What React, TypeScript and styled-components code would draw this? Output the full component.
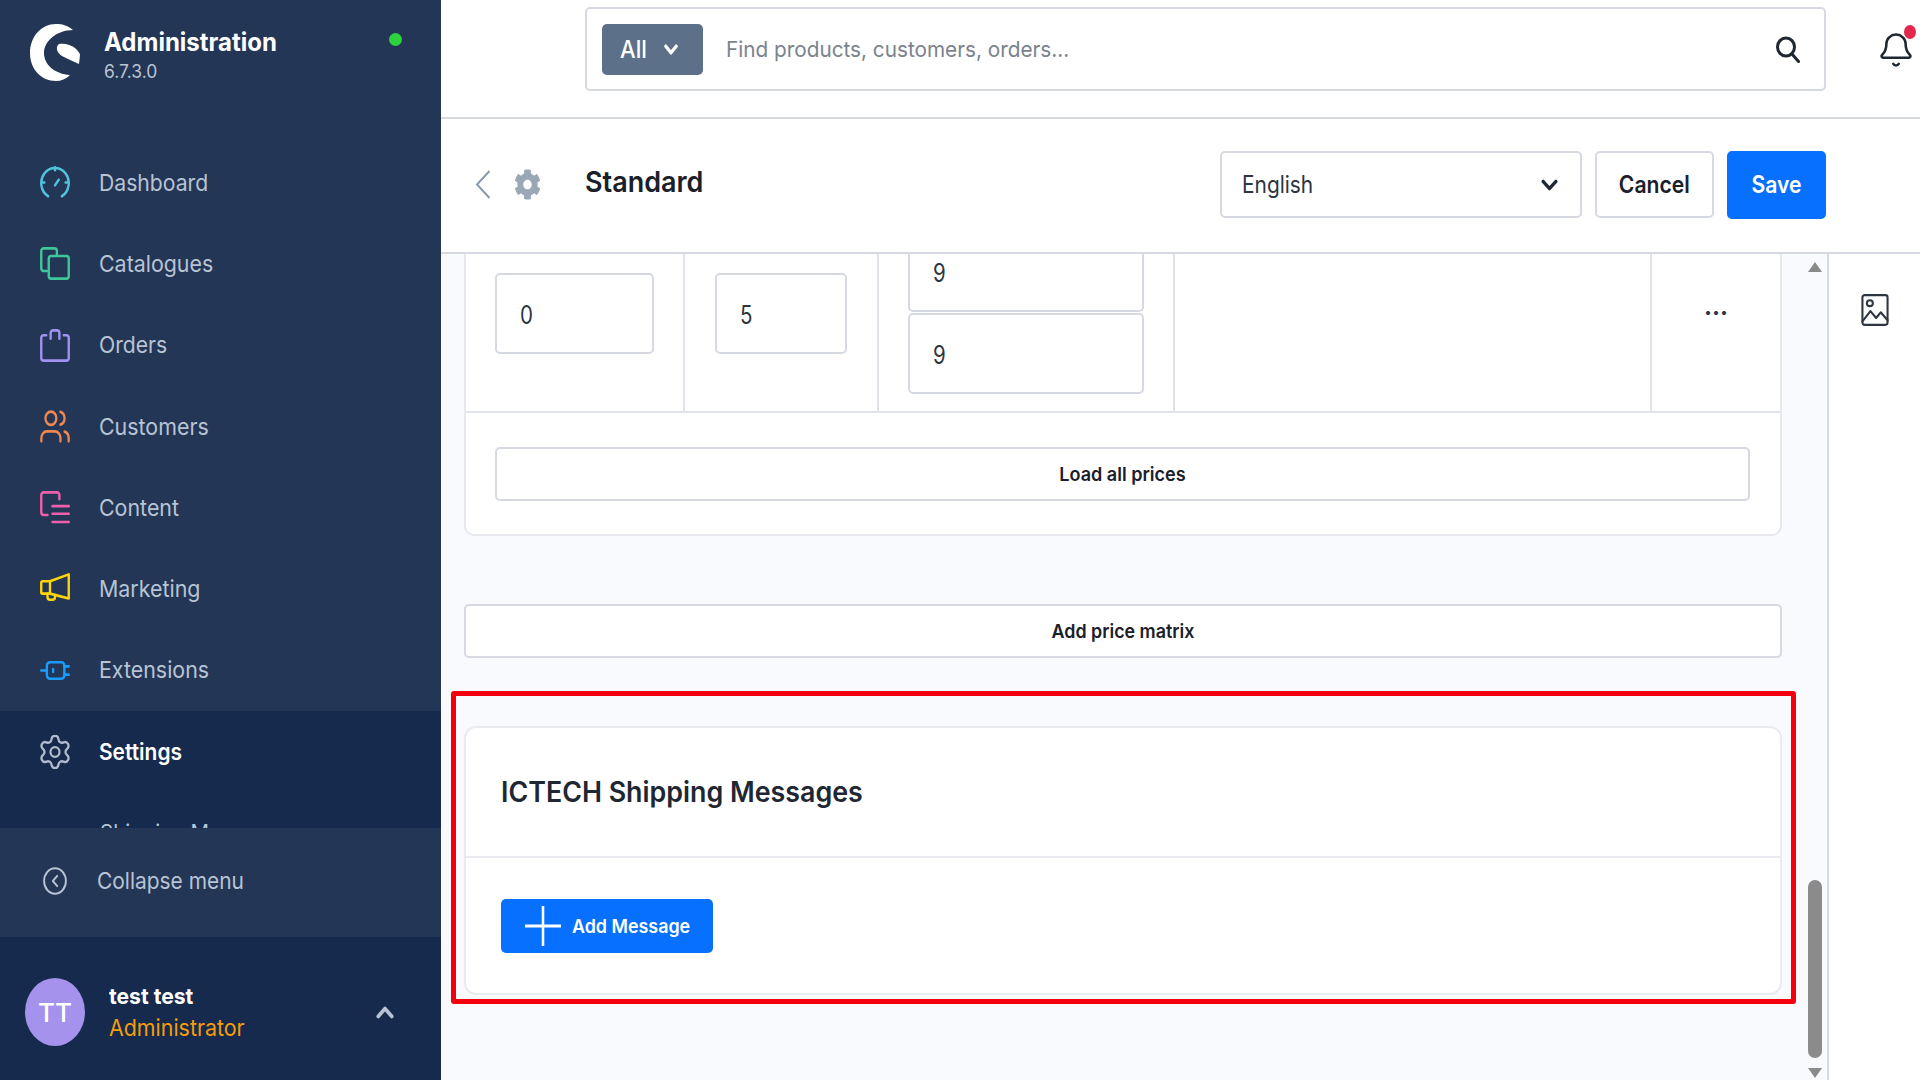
import React from "react";
import styled, { createGlobalStyle } from "styled-components";
import { Bell, ChevronDown, ChevronUp, CircleChevronLeft, Plus, Settings, Users } from "lucide-react";
import { FaCog } from "react-icons/fa";

const Global = createGlobalStyle`
  html, body { margin: 0; padding: 0; background: #fff; }
  * { box-sizing: border-box; }
  body { font-family: Inter, "Noto Sans", sans-serif; color: #1f2733; }
`;

const Page = styled.div`
  display: flex;
  width: 1920px;
  height: 1080px;
  overflow: hidden;
`;

const Sq = styled.span<{ $x: number; $center?: boolean }>`
  display: inline-block;
  white-space: nowrap;
  transform: scaleX(${(p) => p.$x});
  transform-origin: ${(p) => (p.$center ? "center" : "left")} center;
`;

const Sidebar = styled.aside`
  flex: 0 0 441px;
  height: 1080px;
  display: flex;
  flex-direction: column;
  background: #243656;
`;

const Brand = styled.div`
  flex: 0 0 142px;
  display: flex;
  padding: 22px 40px 0 29px;
  gap: 23px;
  position: relative;
`;

const BrandText = styled.div`
  display: flex;
  flex-direction: column;
  padding-top: 5px;
`;

const BrandName = styled.span`
  font-size: 25px;
  line-height: 30px;
  font-weight: 700;
  color: #fff;
`;

const BrandVersion = styled.span`
  font-size: 18px;
  line-height: 29px;
  color: #b9c5d4;
`;

const StatusDot = styled.span`
  position: absolute;
  left: 389px;
  top: 33px;
  width: 13px;
  height: 13px;
  border-radius: 50%;
  background: #2fd13f;
`;

const Nav = styled.nav`
  flex: 0 0 685.5px;
  min-height: 0;
  display: flex;
  flex-direction: column;
`;

const NavItem = styled.div<{ $active?: boolean }>`
  flex: 0 0 81.3px;
  display: flex;
  align-items: center;
  gap: 29px;
  padding-left: 40px;
  font-size: 23px;
  font-weight: ${(p) => (p.$active ? 600 : 400)};
  color: ${(p) => (p.$active ? "#fff" : "#b8c4d4")};
`;

const ActiveGroup = styled.div`
  flex: 1;
  min-height: 0;
  overflow: hidden;
  background: #162a4e;
  display: flex;
  flex-direction: column;
`;

const SubItem = styled.div`
  padding: 25px 0 0 100px;
  font-size: 22px;
  line-height: 30px;
  color: #b8c4d4;
`;

const Collapse = styled.div`
  flex: 0 0 109px;
  display: flex;
  align-items: center;
  padding: 0 0 2px 43px;
  gap: 30px;
  font-size: 23px;
  color: #b8c4d4;
`;

const UserBar = styled.div`
  flex: 1;
  background: #162a4e;
  display: flex;
  align-items: center;
  padding: 8px 47px 0 25px;
`;

const Avatar = styled.div`
  flex: 0 0 60px;
  height: 68px;
  border-radius: 50%;
  background: #a592ec;
  color: #fff;
  font-size: 26px;
  font-weight: 500;
  display: flex;
  align-items: center;
  justify-content: center;
`;

const UserText = styled.div`
  flex: 1;
  margin-left: 24px;
  display: flex;
  flex-direction: column;
`;

const UserName = styled.span`
  font-size: 22px;
  line-height: 32px;
  font-weight: 700;
  color: #fff;
`;

const UserRole = styled.span`
  font-size: 23px;
  line-height: 32px;
  color: #f59c0c;
`;

const Main = styled.div`
  flex: 1;
  min-width: 0;
  display: flex;
  flex-direction: column;
`;

const Header = styled.header`
  flex: 0 0 119px;
  border-bottom: 2px solid #d6d9e1;
  display: flex;
  align-items: flex-start;
  padding: 7px 0 0 144px;
`;

const SearchBox = styled.div`
  width: 1241px;
  height: 84px;
  border: 2px solid #d6d9e1;
  border-radius: 5px;
  display: flex;
  align-items: center;
  padding: 0 24px 0 15px;
`;

const ScopeButton = styled.div`
  width: 101px;
  height: 51px;
  border-radius: 5px;
  background: #5c7189;
  color: #fff;
  display: flex;
  align-items: center;
  gap: 15px;
  padding-left: 18px;
  font-size: 24px;
  font-weight: 500;
`;

const Placeholder = styled.span`
  flex: 1;
  margin-left: 23px;
  font-size: 22px;
  color: #7b838d;
`;

const BellWrap = styled.div`
  position: relative;
  margin: 26px 0 0 54px;
  width: 32px;
  height: 34px;
  color: #1f2733;
`;

const BellDot = styled.span`
  position: absolute;
  top: -8px;
  right: -4px;
  width: 12px;
  height: 14px;
  border-radius: 50%;
  background: #e3274f;
`;

const SmartBar = styled.div`
  flex: 0 0 135px;
  border-bottom: 2px solid #d6d9e1;
  display: flex;
  align-items: center;
  padding: 0 94px 2px 34px;
`;

const BackIcon = styled.svg`
  width: 16px;
  height: 29px;
  fill: none;
  stroke: #8b9aab;
  stroke-width: 2;
`;

const ModuleIcon = styled.span`
  margin-left: 23px;
  color: #9aa8b6;
  display: flex;
`;

const Title = styled.h1`
  flex: 1;
  margin: 0 0 6px 44px;
  font-size: 29px;
  line-height: 36px;
  font-weight: 600;
  color: #1a2029;
`;

const LangSelect = styled.div`
  width: 362px;
  height: 67px;
  border: 2px solid #d6d9e1;
  border-radius: 5px;
  display: flex;
  align-items: center;
  justify-content: space-between;
  padding: 0 22px 0 20px;
  font-size: 24px;
  color: #2d3540;
`;

const Btn = styled.div<{ $primary?: boolean }>`
  margin-left: 13px;
  width: ${(p) => (p.$primary ? "99px" : "119px")};
  height: ${(p) => (p.$primary ? "68px" : "67px")};
  border-radius: 5px;
  border: 2px solid ${(p) => (p.$primary ? "#0870ff" : "#d6d9e1")};
  background: ${(p) => (p.$primary ? "#0870ff" : "#fff")};
  color: ${(p) => (p.$primary ? "#fff" : "#1a2029")};
  display: flex;
  align-items: center;
  justify-content: center;
  font-size: 24px;
  font-weight: 600;
`;

const Body = styled.div`
  flex: 1;
  min-height: 0;
  display: flex;
`;

const Content = styled.div`
  flex: 1;
  min-width: 0;
  background: #f9fafe;
  display: flex;
`;

const Column = styled.div`
  width: 1318px;
  margin-left: 23px;
  display: flex;
  flex-direction: column;
`;

const PriceCard = styled.section`
  height: 282px;
  background: #fff;
  border: 2px solid #e6e8ee;
  border-top: none;
  border-radius: 0 0 10px 10px;
  display: flex;
  flex-direction: column;
`;

const PriceRow = styled.div`
  flex: 0 0 159px;
  display: grid;
  grid-template-columns: 219px 194px 296px 477px 1fr;
  border-bottom: 2px solid #e0e3e9;
`;

const PriceCell = styled.div<{ $inset?: number }>`
  border-right: 2px solid #e0e3e9;
  padding-left: ${(p) => p.$inset ?? 29}px;
  display: flex;
  flex-direction: column;
  align-items: flex-start;
`;

const DotsCell = styled.div`
  display: flex;
  justify-content: center;
  padding-top: 43px;
  font-size: 24px;
  font-weight: 700;
  line-height: 20px;
  color: #2d3540;
`;

const FieldBox = styled.div<{ $w: number; $clip?: boolean; $stacked?: boolean }>`
  width: ${(p) => p.$w}px;
  height: ${(p) => (p.$clip ? "58px" : "81px")};
  margin-top: ${(p) => (p.$clip ? "0" : p.$stacked ? "1px" : "19px")};
  border: 2px solid #d6d9e1;
  border-top-width: ${(p) => (p.$clip ? "0" : "2px")};
  border-radius: ${(p) => (p.$clip ? "0 0 5px 5px" : "5px")};
  display: flex;
  align-items: center;
  padding: ${(p) => (p.$clip ? "0 0 18px 23px" : "2px 0 0 23px")};
  font-size: 25px;
  color: #2d3540;
  background: #fff;
`;

const WideButton = styled.div`
  border: 2px solid #d6d9e1;
  border-radius: 5px;
  background: #fff;
  height: 54px;
  display: flex;
  align-items: center;
  justify-content: center;
  font-size: 19px;
  font-weight: 600;
  color: #1a2029;
`;

const LoadRow = styled.div`
  padding: 34px 30px 0 29px;
`;

const MatrixRow = styled.div`
  margin-top: 68px;
`;

const Card = styled.section`
  position: relative;
  margin-top: 68px;
  height: 269px;
  background: #fff;
  border: 2px solid #e9ebf0;
  border-radius: 12px;
  display: flex;
  flex-direction: column;

  &::after {
    content: "";
    position: absolute;
    inset: -37px -16px -11px -15px;
    border: 5px solid #f5000f;
    border-radius: 3px;
    pointer-events: none;
  }
`;

const CardHead = styled.div`
  flex: 0 0 130px;
  border-bottom: 2px solid #e9ebf0;
  display: flex;
  align-items: center;
  padding-left: 35px;
  font-size: 28px;
  font-weight: 600;
  color: #1f2733;
`;

const CardBody = styled.div`
  padding: 41px 0 0 35px;
`;

const AddButton = styled.div`
  width: 212px;
  height: 54px;
  border-radius: 5px;
  background: #0870ff;
  color: #fff;
  display: flex;
  align-items: center;
  padding-left: 24px;
  gap: 11px;
  font-size: 19px;
  font-weight: 600;
`;

const ScrollTrack = styled.div`
  flex: 1;
  display: flex;
  flex-direction: column;
  align-items: center;
  padding: 8px 0 2px 21px;
`;

const ArrowUp = styled.div`
  width: 0;
  height: 0;
  border: 7px solid transparent;
  border-top: none;
  border-bottom: 10px solid #8a8a8a;
`;

const ArrowDown = styled.div`
  width: 0;
  height: 0;
  margin-top: 10px;
  border: 7px solid transparent;
  border-bottom: none;
  border-top: 10px solid #8a8a8a;
`;

const Thumb = styled.div`
  width: 14px;
  height: 178px;
  margin-top: auto;
  border-radius: 7px;
  background: #8b8b8b;
`;

const RightBar = styled.aside`
  flex: 0 0 93px;
  border-left: 2px solid #d6d9e1;
  display: flex;
  justify-content: center;
  padding-top: 40px;
  color: #2d3540;
`;

const Icon = styled.svg<{ $color: string }>`
  width: 30px;
  height: 33px;
  flex: 0 0 30px;
  fill: none;
  stroke: ${(p) => p.$color};
  stroke-width: 1.9;
  stroke-linecap: round;
  stroke-linejoin: round;
`;

const SearchGlyph = styled.svg`
  width: 24px;
  height: 27px;
  fill: none;
  stroke: #1f2733;
  stroke-width: 3;
  stroke-linecap: round;
`;

const nav: { label: string; x: number; color: string; paths: string[] }[] = [
  { label: "Dashboard", x: 0.92, color: "#4fc3dc", paths: ["M6.5 22A11 11 0 1 1 17.5 22", "M12 14l3-4", "M12 1v2", "M1.5 12h2", "M20.5 12h2"] },
  { label: "Catalogues", x: 0.93, color: "#3fc79a", paths: ["M5.5 17.5H3a2 2 0 0 1-2-2V3a2 2 0 0 1 2-2h8.5a2 2 0 0 1 2 2v3", "M9 6.5h12a2 2 0 0 1 2 2V21a2 2 0 0 1-2 2H9a2 2 0 0 1-2-2V8.5a2 2 0 0 1 2-2z"] },
  { label: "Orders", x: 0.92, color: "#a092f0", paths: ["M5 4.5H3a2 2 0 0 0-2 2V21a2 2 0 0 0 2 2h18a2 2 0 0 0 2-2V6.5a2 2 0 0 0-2-2h-2", "M8.5 7V3a2 2 0 0 1 2-2h3a2 2 0 0 1 2 2v4"] },
  { label: "Customers", x: 0.93, color: "#f08650", paths: [] },
  { label: "Content", x: 0.93, color: "#ee60ab", paths: ["M15.5 6V3a2 2 0 0 0-2-2H3a2 2 0 0 0-2 2v12.5a2 2 0 0 0 2 2h3", "M10 11h13", "M10 16.5h13", "M10 22.5h13"] },
  { label: "Marketing", x: 0.93, color: "#ffd60a", paths: ["M23 1L8 6H2a1 1 0 0 0-1 1v7a1 1 0 0 0 1 1h6l15 3.5z", "M8 6v9", "M6 15v2.5a2 2 0 0 0 2 2h2a2 2 0 0 0 2-2V16"] },
  { label: "Extensions", x: 0.93, color: "#1a9dff", paths: ["M8 6h9a2.5 2.5 0 0 1 2.5 2.5v7A2.5 2.5 0 0 1 17 18H8a2.5 2.5 0 0 1-2.5-2.5v-7A2.5 2.5 0 0 1 8 6z", "M1 12h4.5", "M19.5 9H23", "M19.5 15H23", "M10.5 11v2"] },
];

const Logo = () => (
  <svg width="52" height="60" viewBox="0 0 52 60" fill="#fff">
    <path d="M44 8C38 3 33 2 27 2C12 2 1 15 1 31C1 47 12 59 27 59C32 59 37 57 41 53C26 52 15 43 15 31C15 19 28 8 44 8Z" />
    <path d="M30 22C36 21 42 23 46 26C49 29 51 31 51 33L50 42C44 39 38 37 33 34C28 31 26 25 30 22Z" />
  </svg>
);

export default function App() {
  return (
    <Page>
      <Global />
      <Sidebar>
        <Brand>
          <Logo />
          <BrandText>
            <BrandName><Sq $x={0.96}>Administration</Sq></BrandName>
            <BrandVersion><Sq $x={0.97}>6.7.3.0</Sq></BrandVersion>
          </BrandText>
          <StatusDot />
        </Brand>
        <Nav>
          {nav.map((n) => (
            <NavItem key={n.label}>
              {n.label === "Customers" ? (
                <Users width={30} height={33} color={n.color} strokeWidth={1.7} viewBox="1 2 22 20" preserveAspectRatio="none" />
              ) : (
                <Icon $color={n.color} viewBox="0 0 24 24" preserveAspectRatio="none">
                  {n.paths.map((d) => (
                    <path key={d} d={d} />
                  ))}
                </Icon>
              )}
              <Sq $x={n.x}>{n.label}</Sq>
            </NavItem>
          ))}
          <ActiveGroup>
            <NavItem $active>
              <Settings width={30} height={34} color="#b0bccb" strokeWidth={1.5} viewBox="2 1.5 20 21" preserveAspectRatio="none" />
              <Sq $x={0.91}>Settings</Sq>
            </NavItem>
            <SubItem><Sq $x={0.93}>Shipping Messages</Sq></SubItem>
          </ActiveGroup>
        </Nav>
        <Collapse>
          <CircleChevronLeft width={24} height={28} color="#b8c4d4" strokeWidth={1.7} viewBox="1 1 22 22" preserveAspectRatio="none" />
          <Sq $x={0.91}>Collapse menu</Sq>
        </Collapse>
        <UserBar>
          <Avatar>TT</Avatar>
          <UserText>
            <UserName><Sq $x={0.96}>test test</Sq></UserName>
            <UserRole><Sq $x={0.93}>Administrator</Sq></UserRole>
          </UserText>
          <ChevronUp width={18} height={13} color="#b8c4d4" strokeWidth={3.2} viewBox="4 7 16 10" preserveAspectRatio="none" />
        </UserBar>
      </Sidebar>
      <Main>
        <Header>
          <SearchBox>
            <ScopeButton>
              <Sq $x={0.92}>All</Sq>
              <ChevronDown width={14} height={11} strokeWidth={3.4} viewBox="4 7 16 10" preserveAspectRatio="none" />
            </ScopeButton>
            <Placeholder><Sq $x={0.943}>Find products, customers, orders...</Sq></Placeholder>
            <SearchGlyph viewBox="0 0 24 27">
              <ellipse cx="10" cy="11" rx="8.5" ry="9" />
              <path d="M16 18l6.5 7.5" />
            </SearchGlyph>
          </SearchBox>
          <BellWrap>
            <Bell width={32} height={34} strokeWidth={1.6} viewBox="2 1 20 22" preserveAspectRatio="none" />
            <BellDot />
          </BellWrap>
        </Header>
        <SmartBar>
          <BackIcon viewBox="0 0 16 29">
            <path d="M14.5 1L2 14.5L14.5 28" />
          </BackIcon>
          <ModuleIcon>
            <FaCog size={27} style={{ height: 31 }} preserveAspectRatio="none" />
          </ModuleIcon>
          <Title><Sq $x={0.93}>Standard</Sq></Title>
          <LangSelect>
            <Sq $x={0.87}>English</Sq>
            <ChevronDown width={17} height={12} color="#1f2733" strokeWidth={3} viewBox="4 7 16 10" preserveAspectRatio="none" />
          </LangSelect>
          <Btn><Sq $x={0.88} $center>Cancel</Sq></Btn>
          <Btn $primary><Sq $x={0.88} $center>Save</Sq></Btn>
        </SmartBar>
        <Body>
          <Content>
            <Column>
              <PriceCard>
                <PriceRow>
                  <PriceCell>
                    <FieldBox $w={159}><Sq $x={0.82}>0</Sq></FieldBox>
                  </PriceCell>
                  <PriceCell $inset={30}>
                    <FieldBox $w={132}><Sq $x={0.82}>5</Sq></FieldBox>
                  </PriceCell>
                  <PriceCell>
                    <FieldBox $w={236} $clip><Sq $x={0.82}>9</Sq></FieldBox>
                    <FieldBox $w={236} $stacked><Sq $x={0.82}>9</Sq></FieldBox>
                  </PriceCell>
                  <PriceCell />
                  <DotsCell>...</DotsCell>
                </PriceRow>
                <LoadRow>
                  <WideButton><Sq $x={0.95} $center>Load all prices</Sq></WideButton>
                </LoadRow>
              </PriceCard>
              <MatrixRow>
                <WideButton><Sq $x={0.94} $center>Add price matrix</Sq></WideButton>
              </MatrixRow>
              <Card>
                <CardHead><Sq $x={0.958}>ICTECH Shipping Messages</Sq></CardHead>
                <CardBody>
                  <AddButton>
                    <Plus width={36} height={40} strokeWidth={1} viewBox="5 5 14 14" preserveAspectRatio="none" />
                    <Sq $x={0.94}>Add Message</Sq>
                  </AddButton>
                </CardBody>
              </Card>
            </Column>
            <ScrollTrack>
              <ArrowUp />
              <Thumb />
              <ArrowDown />
            </ScrollTrack>
          </Content>
          <RightBar>
            <svg width="28" height="32" viewBox="0 0 24 28" fill="none" stroke="currentColor" strokeWidth="1.8" strokeLinecap="round" strokeLinejoin="round">
              <rect x="1" y="1" width="22" height="26" rx="2" />
              <circle cx="7.5" cy="8" r="2.6" />
              <path d="M1 24l7-9 5 6 4-5 6 7" />
            </svg>
          </RightBar>
        </Body>
      </Main>
    </Page>
  );
}
